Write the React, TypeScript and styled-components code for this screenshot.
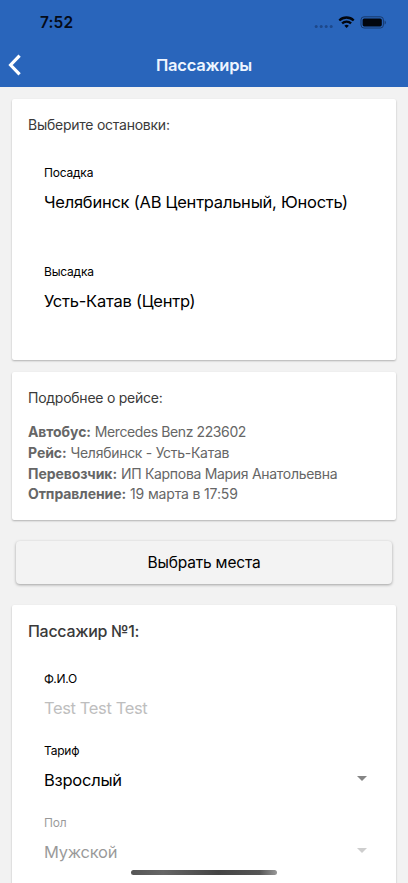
import React from "react";
import styled, { createGlobalStyle } from "styled-components";

const GlobalStyle = createGlobalStyle`
  * { box-sizing: border-box; }
  html, body { margin: 0; padding: 0; background: #f2f2f2; }
  body { font-family: Inter, "Liberation Sans", sans-serif; color: #000; }
`;

const Screen = styled.div`
  position: relative;
  height: 883px;
  overflow: hidden;
  background: #f2f2f2;
`;

const Header = styled.header`
  height: 87px;
  background: #2965bb;
`;

const StatusBar = styled.div`
  height: 43px;
  display: flex;
  align-items: flex-start;
  justify-content: space-between;
  padding: 14px 22px 0 40px;
`;

const Clock = styled.span`
  font-size: 15.5px;
  line-height: 18px;
  font-weight: 600;
  letter-spacing: 0.1px;
  color: #050b18;
`;

const NavBar = styled.div`
  height: 44px;
  display: grid;
  grid-template-columns: 48px 1fr 48px;
  align-items: center;
`;

const BackButton = styled.button`
  display: flex;
  border: 0;
  padding: 0 0 0 8px;
  background: none;
`;

const Title = styled.h1`
  margin: 0;
  text-align: center;
  font-size: 16.5px;
  line-height: 22px;
  font-weight: 600;
  letter-spacing: -0.2px;
  color: #eef5ff;
`;

const Content = styled.main`
  display: flex;
  flex-direction: column;
  padding: 12px 12px 0;
`;

const Card = styled.section<{ $height: number }>`
  flex: none;
  height: ${(p) => p.$height}px;
  padding: 16px;
  border-radius: 2px;
  background: #fff;
  box-shadow: 0 1px 2px rgba(0, 0, 0, 0.27);
  & + & { margin-top: 12px; }
`;

const CardTitle = styled.h2<{ $large?: boolean }>`
  margin: 0;
  color: #3a3a3a;
  font-size: ${(p) => (p.$large ? 16 : 14)}px;
  line-height: 20px;
  font-weight: ${(p) => (p.$large ? 500 : 400)};
  letter-spacing: ${(p) => (p.$large ? -0.3 : -0.25)}px;
`;

const Fields = styled.div<{ $gap: number }>`
  display: flex;
  flex-direction: column;
  gap: ${(p) => p.$gap}px;
  padding: 30px 16px 0;
`;

const Field = styled.div<{ $muted?: boolean }>`
  display: flex;
  flex-direction: column;
  gap: 9px;
  opacity: ${(p) => (p.$muted ? 0.4 : 1)};
`;

const Label = styled.span`
  font-size: 12px;
  line-height: 16px;
  letter-spacing: -0.2px;
`;

const ValueRow = styled.div`
  display: flex;
  justify-content: space-between;
  align-items: center;
  height: 24px;
  margin-right: -3px;
`;

const Value = styled.span<{ $placeholder?: boolean }>`
  font-size: 16.5px;
  line-height: 24px;
  letter-spacing: ${(p) => (p.$placeholder ? -0.38 : -0.24)}px;
  white-space: nowrap;
  color: ${(p) => (p.$placeholder ? "#bebebe" : "#000")};
`;

const Caret = styled.span`
  width: 0;
  height: 0;
  margin-bottom: 4px;
  border: 5px solid transparent;
  border-top-color: #858585;
  border-bottom: 0;
`;

const Details = styled.dl`
  margin: 14px 0 0;
  color: #666;
  font-size: 14px;
  line-height: 20.8px;
`;

const Detail = styled.div<{ $tracking: number }>`
  white-space: nowrap;
  dt, dd { display: inline; margin: 0; }
  dt { font-weight: 700; letter-spacing: -0.08px; }
  dd { letter-spacing: ${(p) => p.$tracking}px; }
`;

const SeatsButton = styled.button`
  height: 43px;
  margin: 21px 4px;
  padding: 1px 0 0;
  border: 0;
  border-radius: 4px;
  background: #f3f3f3;
  box-shadow: 0 1px 3px rgba(0, 0, 0, 0.34);
  color: #000;
  font: 400 15.5px/24px Inter, "Liberation Sans", sans-serif;
  letter-spacing: -0.18px;
`;

const HomeIndicator = styled.div`
  position: absolute;
  left: 131px;
  top: 870px;
  width: 146px;
  height: 5px;
  border-radius: 3px;
  background: linear-gradient(90deg, #555 0%, #666 22%, #444 60%, #555 88%, #999 100%);
`;

const StatusIcons = () => (
  <svg width="78" height="18" viewBox="308 14 78 18" fill="#02060e">
    <g fill="#1d488a">
      <circle cx="316.2" cy="26.6" r="1.5" />
      <circle cx="321.2" cy="26.6" r="1.5" />
      <circle cx="326.2" cy="26.6" r="1.5" />
      <circle cx="331.2" cy="26.6" r="1.5" />
    </g>
    <g fill="none" stroke="#02060e" strokeWidth="2.3">
      <path d="M339.3 20.5a10.2 10.2 0 0 1 14.4 0" />
      <path d="M342.1 23.4a6.4 6.4 0 0 1 9 0" />
    </g>
    <path d="M346.6 28.1l-2.2-2.3a3.3 3.3 0 0 1 4.4 0z" />
    <rect x="361" y="16.8" width="22.4" height="11.2" rx="3" fill="none" stroke="#17396d" />
    <rect x="362.6" y="18.4" width="19.2" height="8" rx="1.6" />
    <path d="M384.6 20.4v4c1.6-.7 1.6-3.3 0-4z" fill="#17396d" />
  </svg>
);

type FieldProps = {
  label: string;
  value: string;
  placeholder?: boolean;
  select?: boolean;
  muted?: boolean;
};

const FormField = ({ label, value, placeholder, select, muted }: FieldProps) => (
  <Field $muted={muted}>
    <Label>{label}</Label>
    <ValueRow>
      <Value $placeholder={placeholder}>{value}</Value>
      {select && <Caret />}
    </ValueRow>
  </Field>
);

const trip = [
  { name: "Автобус:", value: "Mercedes Benz 223602", tracking: -0.4 },
  { name: "Рейс:", value: "Челябинск - Усть-Катав", tracking: -0.28 },
  { name: "Перевозчик:", value: "ИП Карпова Мария Анатольевна", tracking: -0.3 },
  { name: "Отправление:", value: "19 марта в 17:59", tracking: -0.15 },
];

export default function App() {
  return (
    <Screen>
      <GlobalStyle />
      <Header>
        <StatusBar>
          <Clock>7:52</Clock>
          <StatusIcons />
        </StatusBar>
        <NavBar>
          <BackButton aria-label="Назад">
            <svg width="14" height="22" viewBox="0 0 14 22" fill="none" stroke="#fff" strokeWidth="3.2">
              <path d="M11.6 1.6 2.6 11l9 9.4" />
            </svg>
          </BackButton>
          <Title>Пассажиры</Title>
        </NavBar>
      </Header>
      <Content>
        <Card $height={261}>
          <CardTitle>Выберите остановки:</CardTitle>
          <Fields $gap={49.5}>
            <FormField label="Посадка" value="Челябинск (АВ Центральный, Юность)" />
            <FormField label="Высадка" value="Усть-Катав (Центр)" />
          </Fields>
        </Card>
        <Card $height={148}>
          <CardTitle>Подробнее о рейсе:</CardTitle>
          <Details>
            {trip.map(({ name, value, tracking }) => (
              <Detail key={name} $tracking={tracking}>
                <dt>{name}</dt> <dd>{value}</dd>
              </Detail>
            ))}
          </Details>
        </Card>
        <SeatsButton>Выбрать места</SeatsButton>
        <Card $height={320}>
          <CardTitle $large>Пассажир №1:</CardTitle>
          <Fields $gap={23}>
            <FormField label="Ф.И.О" value="Test Test Test" placeholder />
            <FormField label="Тариф" value="Взрослый" select />
            <FormField label="Пол" value="Мужской" select muted />
          </Fields>
        </Card>
      </Content>
      <HomeIndicator />
    </Screen>
  );
}
